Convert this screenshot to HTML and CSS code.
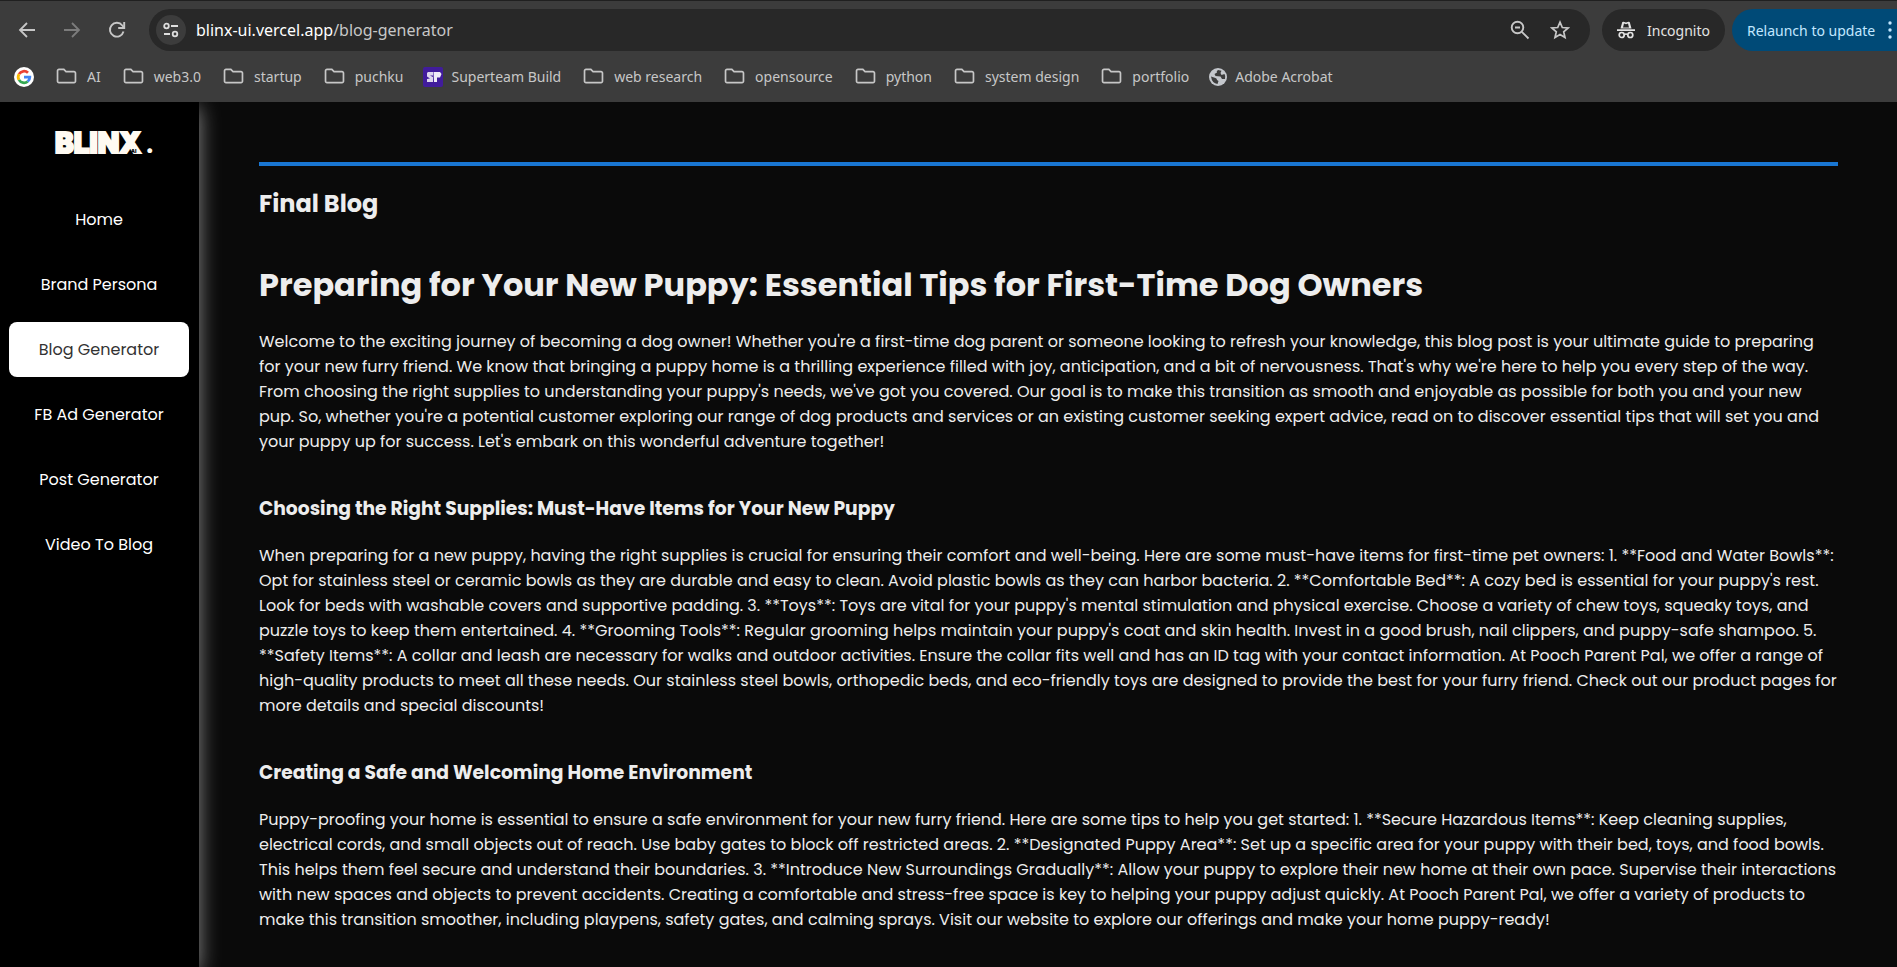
FILE: index.html
```
<!DOCTYPE html>
<html lang="en">
<head>
<meta charset="utf-8">
<title>Blinx - Blog Generator</title>
<link rel="stylesheet" href="styles.css">
</head>
<body>
<svg class="defs" aria-hidden="true">
  <symbol id="folder" viewBox="0 0 22 18"><path d="M1.500 3a1.500 1.500 0 0 1 1.500-1.500h5.200l2.300 2.300h8.500a1.500 1.500 0 0 1 1.500 1.500v8.700a1.500 1.500 0 0 1-1.500 1.500H3a1.500 1.500 0 0 1-1.500-1.500z" fill="none" stroke="#c7c7c7" stroke-width="1.800"/></symbol>
</svg>
<header class="browser">
  <div class="toolbar">
    <div class="nav-buttons">
      <button class="icon-btn" aria-label="Back"><svg width="18" height="18" viewBox="0 0 18 18"><path d="M17 9H3M9 2 2 9l7 7" fill="none" stroke="#c7c7c7" stroke-width="1.800"/></svg></button>
      <button class="icon-btn" aria-label="Forward"><svg width="18" height="18" viewBox="0 0 18 18"><path d="M1 9h14M9 2l7 7-7 7" fill="none" stroke="#7c7c7c" stroke-width="1.800"/></svg></button>
      <button class="icon-btn" aria-label="Reload"><svg width="18" height="18" viewBox="0 0 18 18"><path d="M15.500 10.500A6.900 6.900 0 1 1 14.300 4.500l1.200 1.500" fill="none" stroke="#c7c7c7" stroke-width="1.900"/><path d="M16.200 1v6h-6" fill="none" stroke="#c7c7c7" stroke-width="1.900"/></svg></button>
    </div>
    <div class="address">
      <button class="site-info" aria-label="Site information"><svg width="16" height="16" viewBox="0 0 16 16" fill="none" stroke="#dedede" stroke-width="1.800"><circle cx="3.500" cy="4" r="2.300"/><path d="M8 4h7M1 12h6"/><circle cx="12" cy="12" r="2.300"/></svg></button>
      <div class="url"><span class="host">blinx-ui.vercel.app</span>/blog-generator</div>
      <button class="icon-btn" aria-label="Zoom"><svg width="20" height="20" viewBox="0 0 20 20" fill="none" stroke="#c7c7c7" stroke-width="1.900"><circle cx="7.500" cy="7.500" r="5.800"/><path d="M11.800 11.800 18.500 18.500M5 7.500h5"/></svg></button>
      <button class="icon-btn" aria-label="Bookmark this tab"><svg width="20" height="20" viewBox="0 0 20 20"><path d="M10 2.200l2.300 5.300 5.800.5-4.400 3.800 1.300 5.700L10 14.500l-5 3 1.300-5.700L1.900 8l5.800-.5z" fill="none" stroke="#c7c7c7" stroke-width="1.700"/></svg></button>
    </div>
    <button class="chip incognito"><svg width="18" height="18" viewBox="0 0 18 18"><path d="M0 8.200h18v1.700H0zM3.500 7.500 5.200 1.300Q5.500.4 6.500.7L9 1.400l2.500-.7q1-.3 1.300.6l1.700 6.200z" fill="#e3e3e3"/><path d="M6 6.600 7 2.600l2 .6 2-.6 1 4z" fill="#282828"/><g fill="none" stroke="#e3e3e3" stroke-width="1.700"><circle cx="4.700" cy="14" r="2.500"/><circle cx="13.300" cy="14" r="2.500"/><path d="M7.200 13.500q1.800-1 3.600 0"/></g></svg>Incognito</button>
    <button class="chip relaunch">Relaunch to update<svg width="4" height="18" viewBox="0 0 4 18" fill="#c2e7ff"><circle cx="2" cy="2" r="1.700"/><circle cx="2" cy="9" r="1.700"/><circle cx="2" cy="16" r="1.700"/></svg></button>
  </div>
  <nav class="bookmarks" aria-label="Bookmarks">
    <a class="google" href="#" aria-label="Google"><svg width="20" height="20" viewBox="0 0 20 20"><circle cx="10" cy="10" r="10" fill="#fff"/><g fill="none" stroke-width="2.800"><path d="M5 7.100A5.800 5.800 0 0 1 14 5.800" stroke="#ea4335"/><path d="M5 12.900A5.800 5.800 0 0 1 5 7.100" stroke="#fbbc05"/><path d="M13.700 14.500A5.800 5.800 0 0 1 5 12.900" stroke="#34a853"/><path d="M10 10.200h5.800a5.800 5.800 0 0 1-2.100 4.300" stroke="#4285f4"/></g></svg></a>
    <a href="#"><svg class="folder"><use href="#folder"/></svg>AI</a>
    <a href="#"><svg class="folder"><use href="#folder"/></svg>web3.0</a>
    <a href="#"><svg class="folder"><use href="#folder"/></svg>startup</a>
    <a href="#"><svg class="folder"><use href="#folder"/></svg>puchku</a>
    <a class="site" href="#"><svg width="20" height="20" viewBox="0 0 20 20"><rect width="20" height="20" rx="2" fill="#411c9c"/><path d="M5 5h5v3.500H7l3 1.500v5H4v-3l3-.5-3-2V6z" fill="#ddd6ee"/><path d="M10.500 5H17l1.500 2-1.500 3.500h-3V15h-3z" fill="#f0ecf8"/></svg>Superteam Build</a>
    <a href="#"><svg class="folder"><use href="#folder"/></svg>web research</a>
    <a href="#"><svg class="folder"><use href="#folder"/></svg>opensource</a>
    <a href="#"><svg class="folder"><use href="#folder"/></svg>python</a>
    <a href="#"><svg class="folder"><use href="#folder"/></svg>system design</a>
    <a href="#"><svg class="folder"><use href="#folder"/></svg>portfolio</a>
    <a class="site" href="#"><svg width="18" height="18" viewBox="0 0 18 18"><circle cx="9" cy="9" r="9" fill="#c4c7cc"/><path d="M2 8.500 6.500 10q1.500.5 1.500 2l1.500 1-1 3Q3 15.500 2 8.500zM9 2q-2 1-1 2.500L5.500 6l1 2 5 .5L13 11h3q.8-3-.5-5l-3 1-1-2 1-2.300z" fill="#3c3c3c"/></svg>Adobe Acrobat</a>
  </nav>
</header>
<div class="app">
  <aside class="sidebar">
    <a class="logo" href="#" aria-label="Blinx AI">BLINX<span class="logo-dot">.</span><span class="logo-ai">AI</span></a>
    <nav class="menu" aria-label="Main">
      <a href="#">Home</a>
      <a href="#">Brand Persona</a>
      <a class="active" href="#" aria-current="page">Blog Generator</a>
      <a href="#">FB Ad Generator</a>
      <a href="#">Post Generator</a>
      <a href="#">Video To Blog</a>
    </nav>
  </aside>
  <main class="content">
    <h2>Final Blog</h2>
    <article>
      <h1>Preparing for Your New Puppy: Essential Tips for First-Time Dog Owners</h1>
      <p>Welcome to the exciting journey of becoming a dog owner! Whether you're a first-time dog parent or someone looking to refresh your knowledge, this blog post is your ultimate guide to preparing
      for your new furry friend. We know that bringing a puppy home is a thrilling experience filled with joy, anticipation, and a bit of nervousness. That's why we're here to help you every step of the way.
      From choosing the right supplies to understanding your puppy's needs, we've got you covered. Our goal is to make this transition as smooth and enjoyable as possible for both you and your new
      pup. So, whether you're a potential customer exploring our range of dog products and services or an existing customer seeking expert advice, read on to discover essential tips that will set you and
      your puppy up for success. Let's embark on this wonderful adventure together!</p>
      <h3>Choosing the Right Supplies: Must-Have Items for Your New Puppy</h3>
      <p>When preparing for a new puppy, having the right supplies is crucial for ensuring their comfort and well-being. Here are some must-have items for first-time pet owners: 1. **Food and Water Bowls**:
      Opt for stainless steel or ceramic bowls as they are durable and easy to clean. Avoid plastic bowls as they can harbor bacteria. 2. **Comfortable Bed**: A cozy bed is essential for your puppy's rest.
      Look for beds with washable covers and supportive padding. 3. **Toys**: Toys are vital for your puppy's mental stimulation and physical exercise. Choose a variety of chew toys, squeaky toys, and
      puzzle toys to keep them entertained. 4. **Grooming Tools**: Regular grooming helps maintain your puppy's coat and skin health. Invest in a good brush, nail clippers, and puppy-safe shampoo. 5.
      **Safety Items**: A collar and leash are necessary for walks and outdoor activities. Ensure the collar fits well and has an ID tag with your contact information. At Pooch Parent Pal, we offer a range of
      high-quality products to meet all these needs. Our stainless steel bowls, orthopedic beds, and eco-friendly toys are designed to provide the best for your furry friend. Check out our product pages for
      more details and special discounts!</p>
      <h3>Creating a Safe and Welcoming Home Environment</h3>
      <p>Puppy-proofing your home is essential to ensure a safe environment for your new furry friend. Here are some tips to help you get started: 1. **Secure Hazardous Items**: Keep cleaning supplies,
      electrical cords, and small objects out of reach. Use baby gates to block off restricted areas. 2. **Designated Puppy Area**: Set up a specific area for your puppy with their bed, toys, and food bowls.
      This helps them feel secure and understand their boundaries. 3. **Introduce New Surroundings Gradually**: Allow your puppy to explore their new home at their own pace. Supervise their interactions
      with new spaces and objects to prevent accidents. Creating a comfortable and stress-free space is key to helping your puppy adjust quickly. At Pooch Parent Pal, we offer a variety of products to
      make this transition smoother, including playpens, safety gates, and calming sprays. Visit our website to explore our offerings and make your home puppy-ready!</p>
    </article>
  </main>
</div>
</body>
</html>
```
FILE: styles.css
```
* { box-sizing: border-box; }

body {
  margin: 0;
  min-height: 100vh;
  display: flex;
  flex-direction: column;
  background: #0a0a0a;
  color: #ededed;
  font-family: Poppins, Inter, sans-serif;
  font-size: 16px;
}

a { color: inherit; text-decoration: none; }
button { padding: 0; border: 0; background: none; color: inherit; font: inherit; }
svg { display: block; flex: none; }
.defs { display: none; }

/* Browser chrome */
.browser {
  position: relative;
  z-index: 1;
  flex: none;
  border-top: 1px solid #202020;
  background: #3c3c3c;
  color: #c7c7c7;
  font-family: "Segoe UI", "Noto Sans", sans-serif;
  font-size: 14px;
  overflow: hidden;
}
.toolbar { display: flex; align-items: center; padding: 8px 0 0 17px; }
.icon-btn { display: flex; align-items: center; justify-content: center; width: 20px; height: 20px; }
.nav-buttons { display: flex; gap: 25px; margin-right: 22px; }
.address {
  flex: 1;
  display: flex;
  align-items: center;
  gap: 20px;
  height: 42px;
  padding: 0 20px 0 7px;
  border-radius: 21px;
  background: #282828;
}
.site-info {
  display: flex;
  align-items: center;
  justify-content: center;
  width: 30px;
  height: 30px;
  margin-right: -10px;
  border-radius: 15px;
  background: #3c3c3c;
}
.url { flex: 1; font-size: 16px; }
.host { color: #fff; }
.chip {
  display: flex;
  align-items: center;
  height: 42px;
  margin-left: 12px;
  border-radius: 21px;
  white-space: nowrap;
}
.incognito { width: 123px; padding-left: 15px; gap: 12px; background: #282828; color: #e3e3e3; }
.relaunch {
  width: 165px;
  margin-left: 7px;
  padding-left: 15px;
  gap: 13px;
  border-radius: 21px 0 0 21px;
  background: #004a77;
  color: #c2e7ff;
}
.bookmarks { display: flex; align-items: center; gap: 22px; height: 51px; padding-left: 14px; }
.bookmarks a { display: flex; align-items: center; gap: 10px; white-space: nowrap; }
.bookmarks .site { gap: 8px; margin-left: -2px; }
.folder { width: 21px; height: 17px; }

/* Application */
.app { flex: 1; display: flex; }
.sidebar {
  width: 199px;
  flex: none;
  padding: 20px 10px 0 9px;
  background: #000;
  box-shadow: 0 5px 20px #8c8c8c;
}
.logo {
  position: relative;
  display: block;
  height: 42px;
  margin: 0 0 28px 46px;
  color: #fffaf2;
  font-family: Inter, sans-serif;
  font-size: 28px;
  font-weight: 900;
  line-height: 42px;
  -webkit-text-stroke: 2px #fffaf2;
}
.logo-dot { margin-left: 4px; font-size: 24px; -webkit-text-stroke: 0; }
.logo-ai {
  position: absolute;
  left: 76px;
  top: 26px;
  color: #000;
  font-size: 5px;
  line-height: 6px;
  -webkit-text-stroke: 0;
}
.menu { display: flex; flex-direction: column; gap: 10px; }
.menu a {
  display: flex;
  align-items: center;
  justify-content: center;
  height: 55px;
  border-radius: 8px;
  color: #fff;
}
.menu .active { background: #fff; color: #333; }

.content { flex: 1; min-width: 0; padding: 60px 59px 0 60px; }
.content h2 {
  margin: 0;
  padding-top: 19px;
  border-top: 4px solid #1976d2;
  font-size: 24px;
  line-height: 38px;
}
.content h1 { margin: 37px 0 19px; font-size: 32px; line-height: 50px; }
.content h3 { margin: 40px 0 19px; line-height: 30px; }
.content p { margin: 0; line-height: 25px; }
```
